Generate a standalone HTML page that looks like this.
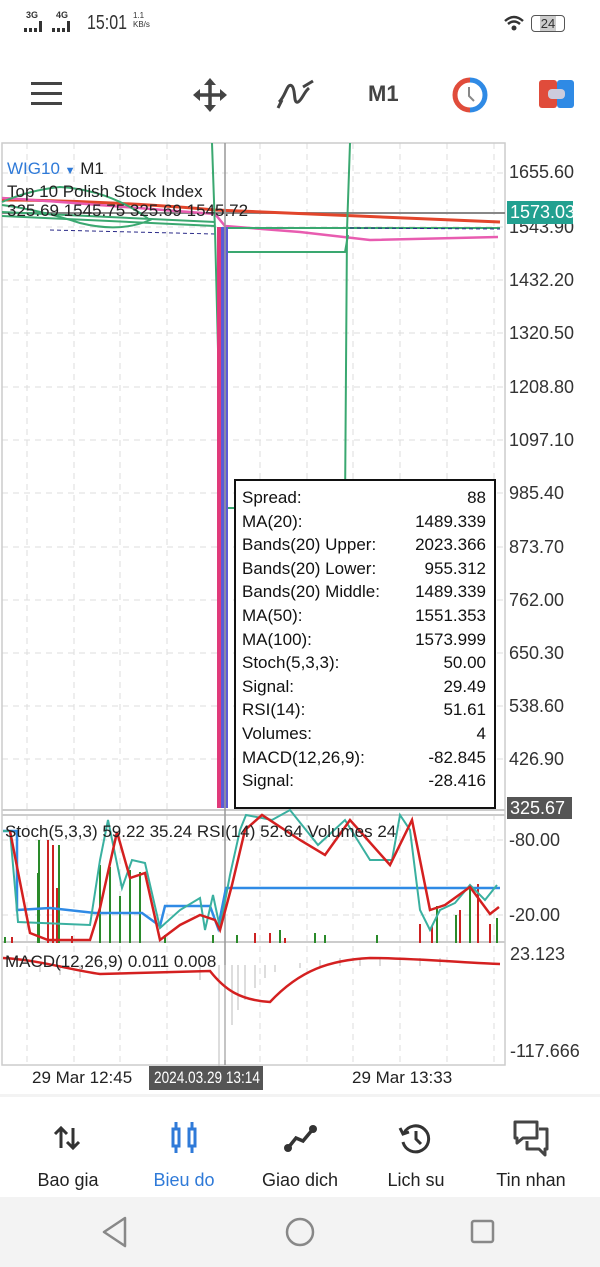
<!DOCTYPE html>
<html><head><meta charset="utf-8"><style>
body{margin:0;width:600px;height:1267px;overflow:hidden;background:#fff;font-family:"Liberation Sans",sans-serif;position:relative}
.a{position:absolute}
.lab{position:absolute;font-size:18px;color:#333;left:509px}
.tt{position:absolute;left:234px;top:479px;width:258px;height:326px;border:2px solid #111;background:#fff;font-size:17px;color:#111;box-sizing:content-box}
.tt div{display:flex;justify-content:space-between;padding:0 8px 0 6px;height:23.6px;line-height:23.6px}
.nav{position:absolute;top:1170px;font-size:18px;color:#222;text-align:center;width:120px}
.sq{display:inline-block;transform:scaleX(0.8);transform-origin:left center;white-space:nowrap}
</style></head><body>
<!-- status bar -->
<div class="a" style="left:26px;top:10px;font-size:9px;font-weight:bold;color:#333">3G</div>
<div class="a" style="left:56px;top:10px;font-size:9px;font-weight:bold;color:#333">4G</div>
<svg class="a" style="left:24px;top:19px" width="60" height="14"><g fill="#333"><rect x="0" y="9" width="3" height="4"/><rect x="5" y="9" width="3" height="4"/><rect x="10" y="9" width="3" height="4"/><rect x="15" y="2" width="3" height="11"/><rect x="28" y="9" width="3" height="4"/><rect x="33" y="9" width="3" height="4"/><rect x="38" y="9" width="3" height="4"/><rect x="43" y="2" width="3" height="11"/></g></svg>
<div class="a" style="left:87px;top:12px;font-size:20px;color:#333"><span class="sq">15:01</span></div>
<div class="a" style="left:133px;top:11px;font-size:8px;color:#333;line-height:9px">1.1<br>KB/s</div>
<svg class="a" style="left:503px;top:14px" width="22" height="18"><path d="M2 7 Q11 -1 20 7" stroke="#333" stroke-width="2.5" fill="none"/><path d="M5 10 Q11 5 17 10" stroke="#333" stroke-width="2.5" fill="none"/><circle cx="11" cy="14" r="2.5" fill="#333"/></svg>
<div class="a" style="left:531px;top:15px;width:32px;height:15px;border:1.5px solid #555;border-radius:4px;font-size:13px;line-height:15px;color:#333;text-align:center"><span style="background:#ccc;padding:0 1px">24</span></div>
<!-- toolbar -->
<svg class="a" style="left:31px;top:82px" width="32" height="24"><g fill="#444"><rect y="0" width="31" height="3"/><rect y="10" width="31" height="3"/><rect y="20" width="31" height="3"/></g></svg>
<svg class="a" style="left:192px;top:77px" width="36" height="36"><g stroke="#444" stroke-width="3.5" fill="none"><path d="M18 4V32M4 18H32"/></g><g fill="#444"><path d="M18 1L12 8H24Z"/><path d="M18 35L12 28H24Z"/><path d="M1 18L8 12V24Z"/><path d="M35 18L28 12V24Z"/></g></svg>
<svg class="a" style="left:276px;top:78px" width="40" height="32"><path d="M3 24 C10 18 11 4 16 8 C20 12 17 26 22 24 C26 22 28 14 33 10" stroke="#444" stroke-width="3" fill="none"/><path d="M6 22 L2 30 M27 9 L37 3" stroke="#444" stroke-width="3"/></svg>
<div class="a" style="left:368px;top:81px;font-size:22px;font-weight:bold;color:#444">M1</div>
<svg class="a" style="left:452px;top:77px" width="36" height="36"><path d="M18 3 A15 15 0 0 0 18 33" stroke="#e04c3b" stroke-width="5" fill="none"/><path d="M18 3 A15 15 0 0 1 18 33" stroke="#2f8ae5" stroke-width="5" fill="none"/><path d="M17 10 V19 L22 24" stroke="#888" stroke-width="2" fill="none"/></svg>
<svg class="a" style="left:539px;top:80px" width="36" height="30"><rect x="0" y="0" width="18" height="28" rx="3" fill="#e04c3b"/><rect x="18" y="0" width="17" height="28" rx="3" fill="#2f8ae5"/><rect x="9" y="9" width="17" height="10" rx="4" fill="#ccd"/></svg>
<!-- chart -->
<svg class="a" style="left:0;top:140px" width="600" height="960">
<g stroke="#ddd" stroke-dasharray="6 5" stroke-width="1">
<path d="M27 3V925M74 3V925M120 3V925M167 3V925M260 3V925M307 3V925M353 3V925M400 3V925M447 3V925M494 3V925"/>
<path d="M2 33H505M2 87H505M2 140H505M2 193H505M2 247H505M2 300H505M2 353H505M2 407H505M2 460H505M2 513H505M2 566H505M2 619H505M2 700H505M2 775H505"/>
</g>
<rect x="2" y="3" width="503" height="922" fill="none" stroke="#ccc" stroke-width="1.5"/>
<path d="M2 670H505M2 675H505M2 802H505" stroke="#ccc" stroke-width="2"/>
<path d="M2 73H505" stroke="#888" stroke-width="2"/>
<path d="M2 60 C60 60 150 64 215 70 L500 82" stroke="#e2452b" stroke-width="3" fill="none"/>
<path d="M2 58 C40 60 110 66 215 74 L225 86 L300 92 L370 100 L498 97" stroke="#e85cb0" stroke-width="2.5" fill="none"/>
<path d="M2 62 Q30 50 60 47 Q110 50 150 80 Q120 93 80 83 Q40 70 2 65" stroke="#3aa870" stroke-width="2" fill="none"/>
<path d="M2 76 L215 86 M225 88H500 M2 72 L215 82" stroke="#3aa870" stroke-width="2" fill="none"/>
<path d="M50 90 L215 94 M350 88 L500 89" stroke="#2a2a88" stroke-width="1" stroke-dasharray="4 3"/>
<path d="M212 3 L215 90 L222 368 L345 368 L347 90 L350 3" stroke="#3aa870" stroke-width="2" fill="none"/>
<path d="M220 112 L345 112 L348 95" stroke="#3aa870" stroke-width="2" fill="none"/>
<rect x="217" y="87" width="4" height="581" fill="#e03a7a"/>
<rect x="221" y="87" width="7" height="581" fill="#5b5bd6"/>
<path d="M225 3V925" stroke="#999" stroke-width="1.5"/>
<g stroke="#2a8a2a" stroke-width="2"><path d="M5 797V803M38 733V803M39 700V803M59 705V803M100 725V803M110 727V803M120 756V803M130 730V803M140 732V803M165 803V795M213 795V803M237 795V803M255 795V803M280 790V803M315 793V803M325 795V803M377 795V803M420 795V803M437 766V803M456 775V803M470 745V803M497 778V803"/></g>
<g stroke="#c22" stroke-width="2"><path d="M12 797V803M48 700V803M53 705V803M57 748V803M72 796V803M255 793V803M270 793V803M285 798V803M420 784V803M432 786V803M460 770V803M478 744V803M490 784V803"/></g>
<path d="M3 691 L17 691 L17 770 L50 768 L95 773 L142 773 L160 786 L165 766 L210 766 L218 788 L226 748 L500 748" stroke="#2f8ae5" stroke-width="2.5" fill="none"/>
<path d="M3 691 L10 691 L18 782 L90 785 L100 720 L108 680 L122 748 L132 720 L145 723 L160 788 L180 770 L200 758 L205 790 L213 755 L220 788 L230 735 L240 690 L246 675 L272 680 L290 670 L318 705 L345 680 L370 720 L392 720 L400 675 L410 690 L420 770 L430 790 L440 770 L455 763 L470 745 L485 760 L497 745" stroke="#3ab0a0" stroke-width="2" fill="none"/>
<path d="M10 691 L30 793 L48 800 L90 800 L100 768 L117 692 L130 738 L145 733 L160 800 L180 785 L200 775 L215 780 L220 790 L232 745 L245 690 L262 675 L300 700 L325 715 L350 680 L390 725 L412 680 L430 770 L445 765 L470 747 L490 774 L499 767" stroke="#d42020" stroke-width="2.5" fill="none"/>
<g stroke="#bbb" stroke-width="1"><path d="M40 825V832M60 825V835M80 825V838M200 825V840M219 825V930M225 825V920M232 825V885M238 825V870M245 825V860M255 825V848M265 825V838M275 825V832M300 823V828M320 820V826M340 818V826M360 818V826M380 818V826M400 818V826M420 818V826M440 818V826"/></g>
<path d="M3 818 C40 820 70 830 100 834 L210 831 C225 850 240 860 270 862 C300 830 330 820 370 818 C410 818 470 823 500 824" stroke="#d42020" stroke-width="2.5" fill="none"/>
</svg>
<div class="a" style="left:7px;top:159px;font-size:17px;color:#2f7ad8">WIG10 <span style="font-size:11px">▼</span> <span style="color:#222">M1</span></div>
<div class="a" style="left:7px;top:182px;font-size:17px;color:#222">Top 10 Polish Stock Index</div>
<div class="a" style="left:7px;top:201px;font-size:17px;color:#222">325.69 1545.75 325.69 1545.72</div>
<div class="a" style="left:5px;top:822px;font-size:17px;color:#222">Stoch(5,3,3) 59.22 35.24 RSI(14) 52.64 Volumes 24</div>
<div class="a" style="left:5px;top:952px;font-size:17px;color:#222">MACD(12,26,9) 0.011 0.008</div>
<div class="lab" style="top:162px">1655.60</div>
<div class="lab" style="top:217px">1543.90</div>
<div class="a" style="left:507px;top:201px;width:66px;height:23px;background:#22a090;color:#fff;font-size:18px;line-height:23px;padding-left:3px;box-sizing:border-box">1573.03</div>
<div class="lab" style="top:270px">1432.20</div>
<div class="lab" style="top:323px">1320.50</div>
<div class="lab" style="top:377px">1208.80</div>
<div class="lab" style="top:430px">1097.10</div>
<div class="lab" style="top:483px">985.40</div>
<div class="lab" style="top:537px">873.70</div>
<div class="lab" style="top:590px">762.00</div>
<div class="lab" style="top:643px">650.30</div>
<div class="lab" style="top:696px">538.60</div>
<div class="lab" style="top:749px">426.90</div>
<div class="a" style="left:507px;top:797px;width:62px;height:22px;background:#555;color:#fff;font-size:18px;line-height:22px;padding-left:3px">325.67</div>
<div class="lab" style="top:830px">-80.00</div>
<div class="lab" style="top:905px">-20.00</div>
<div class="lab" style="top:944px;left:510px">23.123</div>
<div class="lab" style="top:1041px;left:510px">-117.666</div>
<div class="a" style="left:32px;top:1068px;font-size:17px;color:#222">29 Mar 12:45</div>
<div class="a" style="left:149px;top:1066px;width:114px;height:24px;background:#555;color:#fff;font-size:17px;line-height:24px;padding-left:5px;box-sizing:border-box;overflow:hidden"><span class="sq">2024.03.29 13:14</span></div>
<div class="a" style="left:352px;top:1068px;font-size:17px;color:#222">29 Mar 13:33</div>
<div class="tt" style="padding-top:5px;height:321px">
<div><span>Spread:</span><span>88</span></div>
<div><span>MA(20):</span><span>1489.339</span></div>
<div><span>Bands(20) Upper:</span><span>2023.366</span></div>
<div><span>Bands(20) Lower:</span><span>955.312</span></div>
<div><span>Bands(20) Middle:</span><span>1489.339</span></div>
<div><span>MA(50):</span><span>1551.353</span></div>
<div><span>MA(100):</span><span>1573.999</span></div>
<div><span>Stoch(5,3,3):</span><span>50.00</span></div>
<div><span>Signal:</span><span>29.49</span></div>
<div><span>RSI(14):</span><span>51.61</span></div>
<div><span>Volumes:</span><span>4</span></div>
<div><span>MACD(12,26,9):</span><span>-82.845</span></div>
<div><span>Signal:</span><span>-28.416</span></div>
</div>
<div class="a" style="left:0;top:1094px;width:600px;height:3px;background:#f3f3f3"></div>
<svg class="a" style="left:53px;top:1124px" width="30" height="28"><g stroke="#333" stroke-width="3" fill="none"><path d="M8 24V4M2 10L8 4L14 10M20 4V24M14 18L20 24L26 18"/></g></svg>
<svg class="a" style="left:170px;top:1122px" width="30" height="34"><g stroke="#2f7ad8" stroke-width="3" fill="none"><rect x="3" y="7" width="6" height="17"/><rect x="19" y="7" width="6" height="17"/><path d="M6 0V7M6 24V31M22 0V7M22 24V31"/></g></svg>
<svg class="a" style="left:283px;top:1124px" width="36" height="30"><path d="M5 24 L13 14 L20 17 L30 5" stroke="#333" stroke-width="3.5" fill="none"/><circle cx="5" cy="24" r="4" fill="#333"/><circle cx="30" cy="5" r="4" fill="#333"/></svg>
<svg class="a" style="left:398px;top:1121px" width="36" height="36"><path d="M6 12 A13 13 0 1 1 5 21" stroke="#333" stroke-width="3" fill="none"/><path d="M2 7 L5 13 L11 11" stroke="#333" stroke-width="3" fill="none"/><path d="M18 10 V18 L23 23" stroke="#333" stroke-width="3" fill="none"/></svg>
<svg class="a" style="left:511px;top:1119px" width="42" height="40"><path d="M4 3H26V19H12L6 24V19H4Z" stroke="#444" stroke-width="3" fill="none" stroke-linejoin="round"/><path d="M28 10H36V30H34V36L28 30H16V22" stroke="#444" stroke-width="3" fill="none" stroke-linejoin="round"/></svg>
<div class="nav" style="left:8px">Bao gia</div>
<div class="nav" style="left:124px;color:#2f7ad8">Bieu do</div>
<div class="nav" style="left:240px">Giao dich</div>
<div class="nav" style="left:356px">Lich su</div>
<div class="nav" style="left:471px">Tin nhan</div>
<div class="a" style="left:0;top:1197px;width:600px;height:70px;background:#f3f3f3"></div>
<svg class="a" style="left:100px;top:1215px" width="30" height="34"><path d="M25 3 L4 17 L25 31Z" stroke="#888" stroke-width="2.5" fill="none" stroke-linejoin="round"/></svg>
<svg class="a" style="left:284px;top:1216px" width="32" height="32"><circle cx="16" cy="16" r="13" stroke="#888" stroke-width="2.5" fill="none"/></svg>
<svg class="a" style="left:470px;top:1219px" width="26" height="26"><rect x="2" y="2" width="21" height="21" rx="2" stroke="#888" stroke-width="2.5" fill="none"/></svg>
</body></html>
